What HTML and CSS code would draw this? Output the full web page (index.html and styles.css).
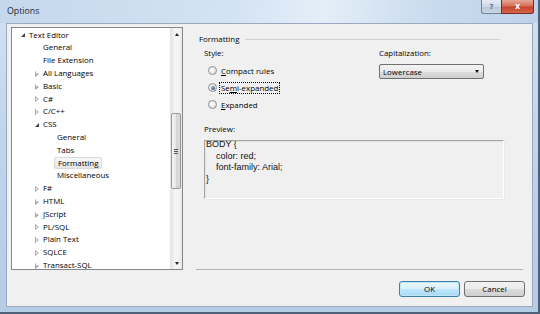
FILE: index.html
```html
<!DOCTYPE html>
<html lang="en">
<head>
    <meta charset="UTF-8">
    <meta name="viewport" content="width=device-width, initial-scale=1.0">
    <title>Options</title>
    <link rel="stylesheet" href="styles.css">
</head>
<body>
<div class="window">
  <!-- caption bar with help and close buttons -->
  <div class="titlebar">
    <span class="title">Options</span>
    <div class="caption">
      <span class="cap-btn help">?</span>
      <span class="cap-btn close">x</span>
    </div>
  </div>

  <div class="client">
    <div class="main">
      <!-- left: category tree -->
      <div class="tree">
        <ul class="tree-list">
          <li class="node lvl0"><span class="tog open"></span>Text Editor</li>
          <li class="node lvl1"><span class="tog"></span>General</li>
          <li class="node lvl1"><span class="tog"></span>File Extension</li>
          <li class="node lvl1"><span class="tog shut"></span>All Languages</li>
          <li class="node lvl1"><span class="tog shut"></span>Basic</li>
          <li class="node lvl1"><span class="tog shut"></span>C#</li>
          <li class="node lvl1"><span class="tog shut"></span>C/C++</li>
          <li class="node lvl1"><span class="tog open"></span>CSS</li>
          <li class="node lvl2"><span class="tog"></span>General</li>
          <li class="node lvl2"><span class="tog"></span>Tabs</li>
          <li class="node lvl2"><span class="tog"></span><span class="selected">Formatting</span></li>
          <li class="node lvl2"><span class="tog"></span>Miscellaneous</li>
          <li class="node lvl1"><span class="tog shut"></span>F#</li>
          <li class="node lvl1"><span class="tog shut"></span>HTML</li>
          <li class="node lvl1"><span class="tog shut"></span>JScript</li>
          <li class="node lvl1"><span class="tog shut"></span>PL/SQL</li>
          <li class="node lvl1"><span class="tog shut"></span>Plain Text</li>
          <li class="node lvl1"><span class="tog shut"></span>SQLCE</li>
          <li class="node lvl1"><span class="tog shut"></span>Transact-SQL</li>
        </ul>
        <div class="vscroll">
          <span class="sb-btn"><span class="arrow up"></span></span>
          <div class="thumb"><span class="grip"></span></div>
          <span class="sb-btn bottom"><span class="arrow down"></span></span>
        </div>
      </div>

      <!-- right: formatting page -->
      <div class="pane">
        <div class="group-head"><span>Formatting</span><span class="group-line"></span></div>

        <div class="options">
          <div class="col-style">
            <div class="label">Style:</div>
            <div class="radios">
              <div class="radio-row"><span class="radio"></span><span class="radio-text"><u>C</u>ompact rules</span></div>
              <div class="radio-row"><span class="radio checked"></span><span class="radio-text focus">Se<u>m</u>i-expanded</span></div>
              <div class="radio-row"><span class="radio"></span><span class="radio-text"><u>E</u>xpanded</span></div>
            </div>
          </div>
          <div class="col-caps">
            <div class="label">Capitalization:</div>
            <div class="combo"><span>Lowercase</span><span class="combo-arrow"></span></div>
          </div>
        </div>

        <div class="label preview-label">Preview:</div>
        <div class="preview"><pre>BODY {
    color: red;
    font-family: Arial;
}</pre></div>

        <div class="separator"></div>
      </div>
    </div>

    <div class="footer">
      <button class="btn default">OK</button>
      <button class="btn">Cancel</button>
    </div>
  </div>
</div>
</body>
</html>
```

FILE: styles.css
```css
* {
    box-sizing: border-box;
}

body {
    margin: 0;
    font-family: "Open Sans", "Noto Sans", sans-serif;
    font-size: 7.9px;
    color: #000;
}

.window {
    width: 540px;
    height: 314px;
    background: linear-gradient(180deg, #d3e2f2 0%, #c2d6eb 40%, #b5cce5 100%);
    border-right: 2px solid #4f6079;
    border-bottom: 2px solid #4f6079;
}

/* title bar */
.titlebar {
    height: 23px;
    display: flex;
    align-items: flex-start;
    background: linear-gradient(100deg, #c4d7ec 0%, #d5e4f4 45%, #e4eef8 60%, #c9dbee 80%, #bdd2e9 100%);
}
.title {
    margin: 5px 0 0 7px;
    font-size: 8.8px;
    color: #1b2a3c;
}
.caption {
    margin-left: auto;
    margin-right: 4px;
    display: flex;
}
.cap-btn {
    height: 14px;
    display: flex;
    align-items: center;
    justify-content: center;
    font-family: "DejaVu Sans", sans-serif;
    font-weight: bold;
}
.help {
    width: 20px;
    border: 1px solid #72829a;
    border-top: none;
    border-right: none;
    border-radius: 0 0 0 3px;
    background: linear-gradient(180deg, #e4ecf5 0%, #cdd9e6 50%, #b8c7d8 51%, #c9d6e3 100%);
    color: #5f6d80;
    font-size: 7px;
}
.close {
    width: 33px;
    border: 1px solid #7b2c22;
    border-top: none;
    border-radius: 0 0 3px 0;
    background: linear-gradient(180deg, #e6a795 0%, #d6705c 45%, #c7422c 55%, #d76649 100%);
    color: #fff;
    font-size: 8px;
}

/* client area */
.client {
    margin: 0 5px 0 6px;
    width: 527px;
    height: 284px;
    background: #f0f0f0;
    border: 1px solid #97aac0;
    padding: 3px 0 0 4px;
    display: flex;
    flex-direction: column;
}
.main {
    display: flex;
    height: 243px;
}

/* tree view */
.tree {
    width: 172px;
    height: 243px;
    border: 1px solid #828790;
    background: #fff;
    display: flex;
}
.tree-list {
    list-style: none;
    margin: 0;
    padding: 0.6px 0 0 0;
    flex: 1;
    overflow: hidden;
}
.node {
    height: 12.8px;
    line-height: 12.8px;
    display: flex;
    align-items: center;
    white-space: nowrap;
}
.lvl0 { padding-left: 9px; }
.lvl1 { padding-left: 23px; }
.lvl2 { padding-left: 37px; }
.tog {
    width: 8px;
    height: 8px;
    flex: none;
    position: relative;
}
.tog.open::before {
    content: "";
    position: absolute;
    left: 0px;
    top: 2px;
    border-style: solid;
    border-width: 0 0 4px 4px;
    border-color: transparent transparent #404040 transparent;
}
.tog.shut::before {
    content: "";
    position: absolute;
    left: 0;
    top: 1.5px;
    border-style: solid;
    border-width: 3px 0 3px 4px;
    border-color: transparent transparent transparent #a6a6a6;
}
.tog.shut::after {
    content: "";
    position: absolute;
    left: 1px;
    top: 3px;
    border-style: solid;
    border-width: 1.5px 0 1.5px 2px;
    border-color: transparent transparent transparent #fff;
}
.selected {
    margin-left: -3px;
    padding: 0 3px;
    line-height: 10px;
    background: linear-gradient(180deg, #f8f8f8, #e5e5e5);
    border: 1px solid #d9d9d9;
    border-radius: 2px;
}

/* scrollbar */
.vscroll {
    width: 12px;
    flex: none;
    background: linear-gradient(90deg, #e3e3e3, #f4f4f4 30%, #f4f4f4 70%, #e8e8e8);
    border-left: 1px solid #e6e6e6;
    display: flex;
    flex-direction: column;
}
.sb-btn {
    height: 12px;
    display: flex;
    align-items: center;
    justify-content: center;
}
.sb-btn.bottom {
    margin-top: auto;
}
.arrow {
    width: 0;
    height: 0;
    border-style: solid;
}
.arrow.up {
    border-width: 0 2.5px 3px 2.5px;
    border-color: transparent transparent #222 transparent;
}
.arrow.down {
    border-width: 3px 2.5px 0 2.5px;
    border-color: #222 transparent transparent transparent;
}
.thumb {
    margin: 73px 0 0 0;
    width: 10px;
    height: 76px;
    border: 1px solid #979797;
    border-radius: 2px;
    background: linear-gradient(90deg, #f4f4f4, #e7e7e7 50%, #d6d6d6 51%, #d9d9d9);
    display: flex;
    align-items: center;
    justify-content: center;
}
.grip {
    width: 4px;
    height: 5px;
    background: repeating-linear-gradient(180deg, #555 0 1px, transparent 1px 2px);
}

/* formatting page */
.pane {
    width: 327px;
    margin-left: 13px;
    display: flex;
    flex-direction: column;
}
.group-head {
    margin-top: 6px;
    height: 12px;
    padding-left: 3px;
    display: flex;
    align-items: center;
}
.group-line {
    flex: 1;
    height: 1px;
    margin: 0 23px 0 6px;
    background: #cfd3d8;
}
.label {
    height: 12px;
    line-height: 12px;
}
.options {
    display: flex;
    margin-top: 2px;
}
.col-style {
    width: 183px;
    padding-left: 8px;
}
.radios {
    padding-top: 3px;
}
.radio-row {
    height: 17px;
    display: flex;
    align-items: center;
    padding-left: 4px;
}
.radio {
    width: 9px;
    height: 9px;
    border-radius: 50%;
    border: 1px solid #8e8f8f;
    background: radial-gradient(circle at 40% 40%, #ffffff, #e2e2e2 70%, #cfcfcf);
    margin-right: 2px;
    display: flex;
    align-items: center;
    justify-content: center;
}
.radio.checked::after {
    content: "";
    width: 4px;
    height: 4px;
    border-radius: 50%;
    background: radial-gradient(circle at 40% 35%, #9fb7cf, #2c4f73 80%);
}
.radio-text {
    padding: 0 1px;
    line-height: 10px;
    border: 1px dotted transparent;
}
.radio-text.focus {
    border-color: #000;
}
.combo {
    margin-top: 5px;
    width: 105px;
    height: 15px;
    border: 1px solid #707070;
    border-radius: 2px;
    background: linear-gradient(180deg, #f2f2f2 0%, #ebebeb 50%, #dddddd 51%, #cfcfcf 100%);
    display: flex;
    align-items: center;
    padding: 0 4px 0 3px;
}
.combo-arrow {
    margin-left: auto;
    width: 0;
    height: 0;
    border-style: solid;
    border-width: 3px 2.5px 0 2.5px;
    border-color: #000 transparent transparent transparent;
}
.preview-label {
    margin: 10px 0 0 8px;
}
.preview {
    margin: 5px 0 0 8px;
    width: 300px;
    height: 59px;
    border: 1px solid;
    border-color: #a5a5a5 #ffffff #ffffff #a5a5a5;
    box-shadow: inset 1px 1px 0 #e3e3e3, 1px 1px 0 #e8e8e8;
    background: #f0f0f0;
    overflow: hidden;
}
.preview pre {
    margin: -2px 0 0 1px;
    font-family: "Liberation Sans", Arial, sans-serif;
    font-size: 9px;
    line-height: 11.5px;
    color: #111;
}
.separator {
    margin-top: auto;
    height: 1px;
    background: #b3b3b3;
}

/* dialog buttons */
.footer {
    margin-top: 11px;
    display: flex;
    justify-content: flex-end;
    gap: 4px;
    padding-right: 7px;
}
.btn {
    width: 61px;
    height: 16px;
    padding: 0;
    font-family: "Open Sans", "Noto Sans", sans-serif;
    font-size: 7.9px;
    color: #000;
    border: 1px solid #707070;
    border-radius: 3px;
    background: linear-gradient(180deg, #f2f2f2 0%, #ebebeb 50%, #dddddd 51%, #cfcfcf 100%);
}
.btn.default {
    border-color: #3c7fb1;
    background: linear-gradient(180deg, #eaf6fd 0%, #d9f0fc 50%, #bee6fd 51%, #a7d9f5 100%);
    box-shadow: inset 0 0 0 1px #bde4f8;
}
```
